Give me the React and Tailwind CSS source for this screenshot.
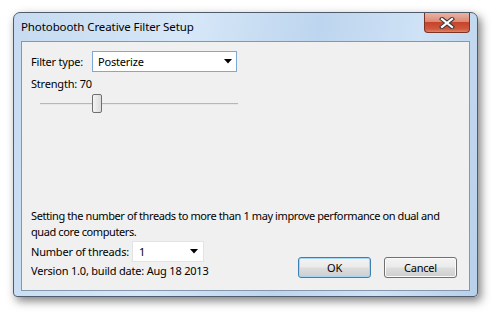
import React from "react";

const font = { fontFamily: '"Noto Sans", "Open Sans", sans-serif' };

const Arrow = () => (
  <svg width="8" height="5" viewBox="0 0 8 5" className="shrink-0">
    <path d="M0 0h8L4 4.5z" fill="#000" />
  </svg>
);

const CloseButton = () => (
  <div className="flex h-[20px] w-[46px] items-center justify-center rounded-b-[4px] border border-t-0 border-[#7a3325] bg-[linear-gradient(#eab3a5_0%,#dc8a75_45%,#c7432b_50%,#cf5a3d_85%,#e0866a_100%)]">
    <svg width="16" height="12" viewBox="0 0 16 12">
      <path d="M3 2l10 8M13 2L3 10" stroke="#3a3a3a" strokeWidth="4.2" strokeLinecap="square" />
      <path d="M3 2l10 8M13 2L3 10" stroke="#ffffff" strokeWidth="2.2" strokeLinecap="square" />
    </svg>
  </div>
);

const Button = ({ children, primary }) => (
  <div
    className={`flex h-[21px] w-[73px] items-center justify-center rounded-[3px] border text-black bg-[linear-gradient(#f3f3f3_0%,#ebebeb_48%,#dddddd_52%,#cfcfcf_100%)] ${
      primary ? "border-[#3c7fb1] shadow-[inset_0_0_0_1px_#a4d7f5]" : "border-[#707070] shadow-[inset_0_0_0_1px_#fbfbfb]"
    }`}
  >
    {children}
  </div>
);

export default function App() {
  return (
    <div className="h-[313px] w-[499px] overflow-hidden bg-white" style={font}>
      <div className="ml-[13px] mt-[12px] flex h-[285px] w-[465px] flex-col rounded-t-[7px] rounded-b-[4px] border border-[#505c6b] bg-[linear-gradient(100deg,#c6dbf1_0%,#d6e7f8_35%,#bdd5ee_60%,#cfe2f6_80%,#b8d0ea_100%)] px-[7px] pb-[5px] shadow-[3px_4px_10px_rgba(0,0,0,0.5)]">
        <div className="flex h-[28px] items-start justify-between">
          <div className="pt-[6px] text-[11.5px] leading-[16px] tracking-[-0.1px] text-black">Photobooth Creative Filter Setup</div>
          <CloseButton />
        </div>
        <div className="flex flex-1 flex-col border border-[#8497ad] bg-[#f0f0f0] px-[9px] pb-[11px] pt-[9px] text-[11px] leading-[16px] tracking-[-0.2px] text-black">
          <div className="flex items-center">
            <span className="w-[61px] shrink-0 whitespace-nowrap">Filter type:</span>
            <div className="flex h-[21px] w-[145px] items-center justify-between border border-[#7ea8d6] bg-white pl-[5px] pr-[4px]">
              <span>Posterize</span>
              <Arrow />
            </div>
          </div>
          <div className="mt-[4px]">Strength: 70</div>
          <div className="relative ml-[9px] mt-[2px] h-[20px] w-[198px]">
            <div className="absolute left-0 right-0 top-[9px] h-[2px] border-t border-[#b7b7b7] bg-[#e7e7e7]" />
            <div className="absolute left-[52px] top-0 h-[19px] w-[10px] rounded-[2px] border border-[#6f6f6f] bg-[linear-gradient(90deg,#f4f4f4,#dcdcdc)]" />
          </div>
          <div className="flex-1" />
          <p className="whitespace-nowrap tracking-[-0.4px]">
            Setting the number of threads to more than 1 may improve performance on dual and
            <br />
            quad core computers.
          </p>
          <div className="mt-[1px] flex items-end justify-between">
            <div className="flex flex-col">
              <div className="flex items-center">
                <span className="w-[101px] shrink-0 whitespace-nowrap">Number of threads:</span>
                <div className="flex h-[21px] w-[72px] items-center justify-between border border-[#e3e3e3] bg-white pl-[6px] pr-[5px]">
                  <span>1</span>
                  <Arrow />
                </div>
              </div>
              <div className="mt-[1px]">Version 1.0, build date: Aug 18 2013</div>
            </div>
            <div className="mb-[1px] flex gap-[13px] pr-[3px]">
              <Button primary>OK</Button>
              <Button>Cancel</Button>
            </div>
          </div>
        </div>
      </div>
    </div>
  );
}
